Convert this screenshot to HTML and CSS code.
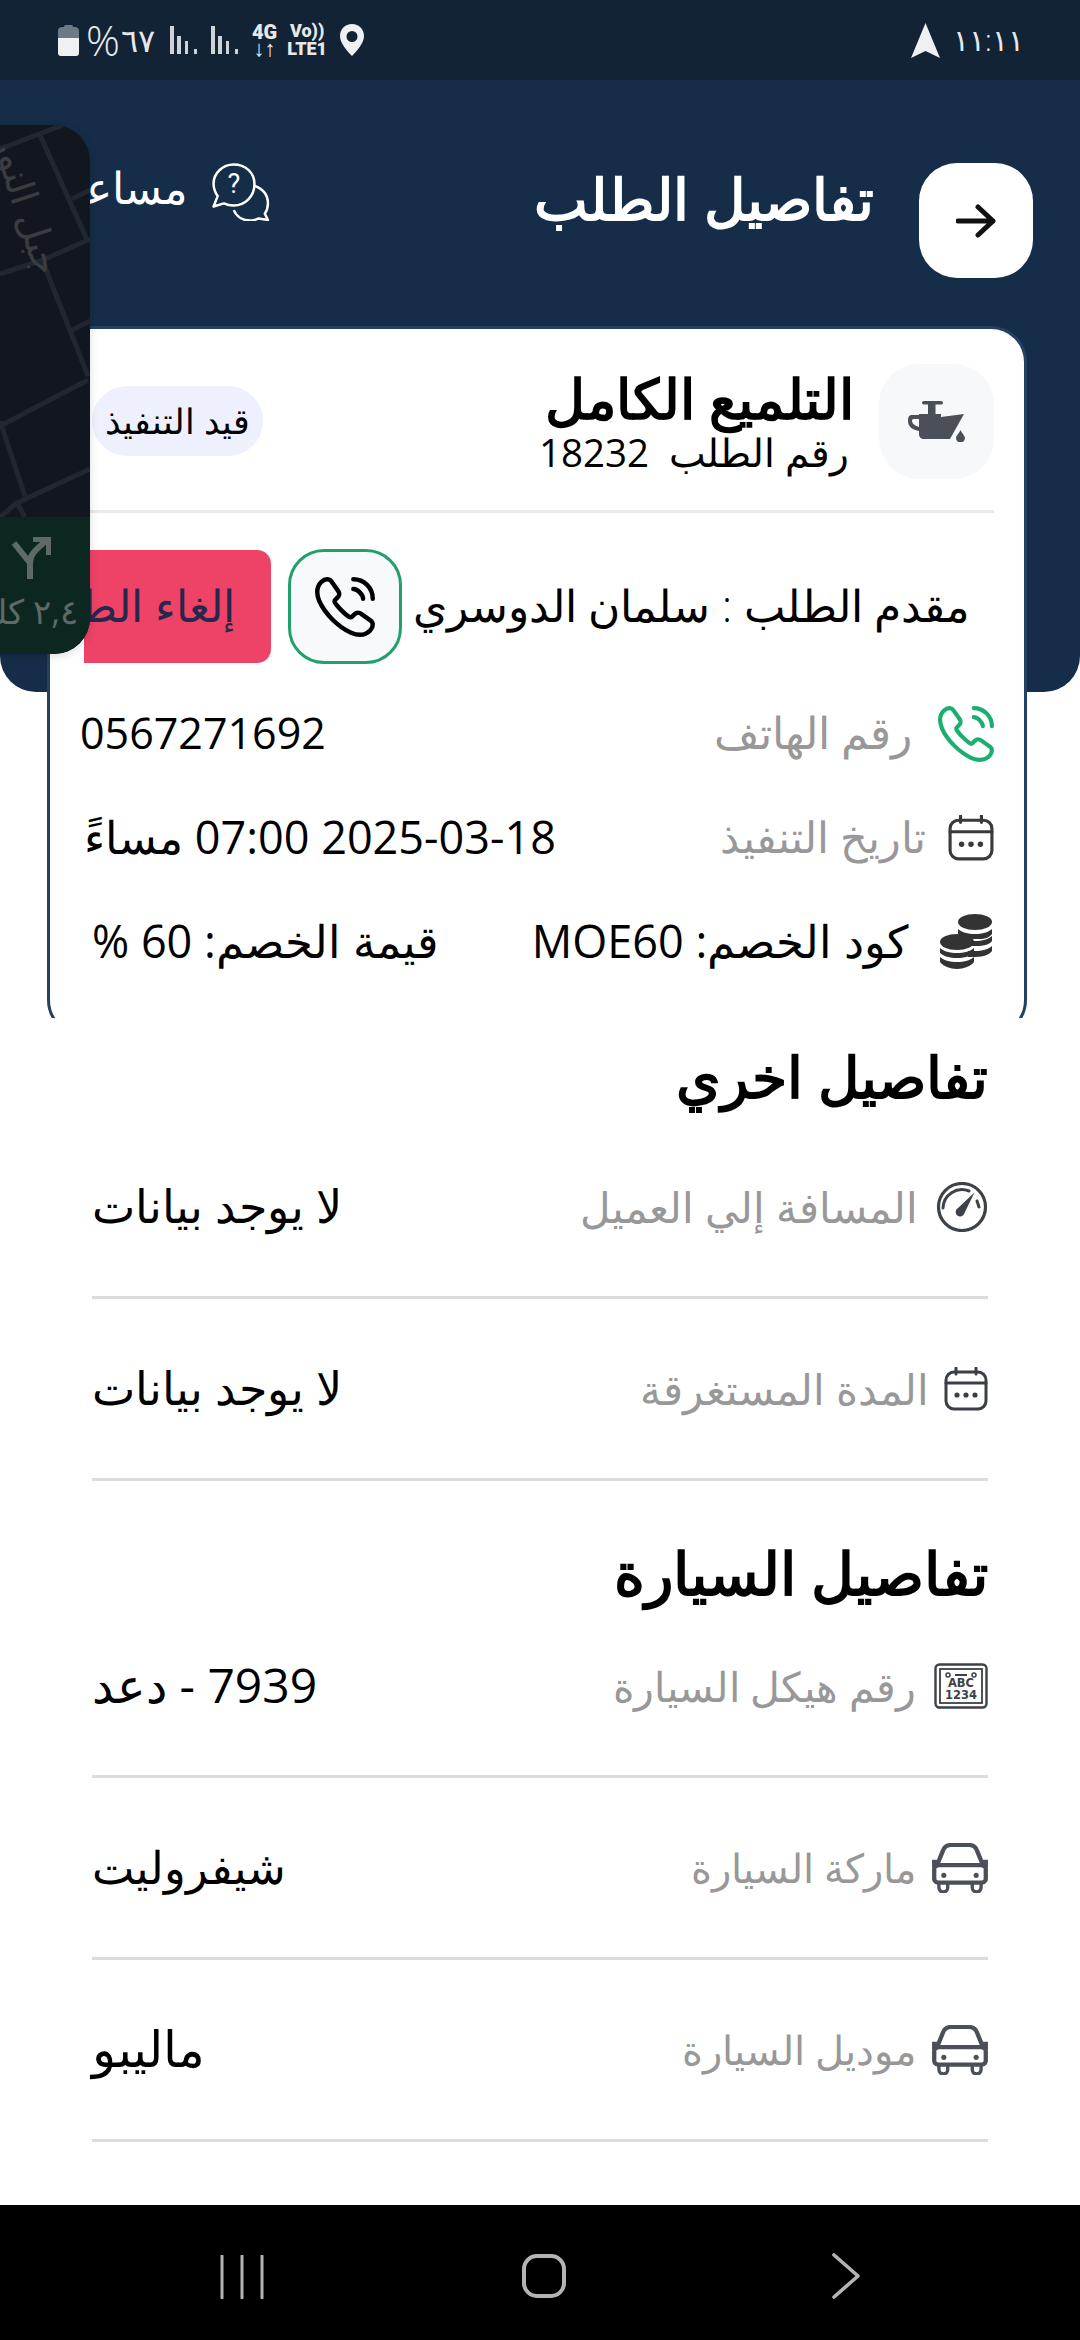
FILE: index.html
```html
<!DOCTYPE html>
<html lang="ar" dir="rtl">
<head>
<meta charset="utf-8">
<title>تفاصيل الطلب</title>
<link rel="stylesheet" href="styles.css">
</head>
<body>
<svg class="sprites" width="0" height="0">
  <symbol id="i-call" viewBox="1.2 1.2 21.6 21.6">
    <path fill="none" stroke="currentColor" stroke-width="1.6" stroke-miterlimit="10" d="M21.97 18.33c0 .36-.08.73-.25 1.09-.17.36-.39.7-.68 1.02-.49.54-1.03.93-1.64 1.18-.6.25-1.25.38-1.95.38-1.02 0-2.11-.24-3.26-.73s-2.3-1.15-3.44-1.98a28.75 28.75 0 0 1-3.28-2.8 28.414 28.414 0 0 1-2.79-3.27c-.82-1.14-1.48-2.28-1.96-3.41C2.24 8.67 2 7.58 2 6.54c0-.68.12-1.33.36-1.93.24-.61.62-1.17 1.15-1.67C4.15 2.31 4.85 2 5.59 2c.28 0 .56.06.81.18.26.12.49.3.67.56l2.32 3.27c.18.25.31.48.4.7.09.21.14.42.14.61 0 .24-.07.48-.21.71-.13.23-.32.47-.56.71l-.76.79c-.11.11-.16.24-.16.4 0 .08.01.15.03.23.03.08.06.14.08.2.18.33.49.76.93 1.28.45.52.93 1.05 1.45 1.58.54.53 1.06 1.02 1.59 1.47.52.44.95.74 1.29.92.05.02.11.05.18.08.08.03.16.04.25.04.17 0 .3-.06.41-.17l.76-.75c.25-.25.49-.44.72-.56.23-.14.46-.21.71-.21.19 0 .39.04.61.13.22.09.45.22.7.39l3.31 2.35c.26.18.44.39.55.64.1.25.16.5.16.78Z"/>
    <path fill="none" stroke="currentColor" stroke-width="1.6" stroke-linecap="round" stroke-linejoin="round" d="M18.5 9c0-.6-.47-1.52-1.17-2.27-.64-.69-1.49-1.23-2.33-1.23M22 9c0-3.87-3.13-7-7-7"/>
  </symbol>
  <symbol id="i-calendar" viewBox="0 0 44 44">
    <rect x="2" y="5" width="40" height="37" rx="8" fill="none" stroke="currentColor" stroke-width="3"/>
    <path d="M2 16h40M12 1v6M32 1v6" fill="none" stroke="currentColor" stroke-width="3" stroke-linecap="round"/>
    <circle cx="13" cy="28" r="2.6" fill="currentColor"/><circle cx="22" cy="28" r="2.6" fill="currentColor"/><circle cx="31" cy="28" r="2.6" fill="currentColor"/>
  </symbol>
  <symbol id="i-car" viewBox="0 0 57 51">
    <g fill="none" stroke="currentColor" stroke-linecap="round">
      <path stroke-width="4.4" stroke-linejoin="round" d="M5 23 11 8c1-3 4-6 9-6h17c5 0 8 3 9 6l6 15"/>
      <rect x="2.200" y="22.500" width="52.600" height="18" rx="4" stroke-width="4.400"/>
      <path stroke-width="3.400" d="M7 42v3.500a4.500 4.500 0 0 0 9 0V42M41 42v3.500a4.500 4.500 0 0 0 9 0V42"/>
    </g>
    <path fill="currentColor" d="M0 17h5v8H0ZM52 17h5v8h-5Z"/>
    <circle cx="12" cy="33" r="2.600" fill="currentColor"/><circle cx="45" cy="33" r="2.600" fill="currentColor"/>
  </symbol>
</svg>

<div class="page">
  <div class="status" dir="ltr">
    <div class="status-left">
      <svg class="st-battery" viewBox="0 0 21 32"><path fill="#6c7a86" d="M6 3c0-1.500 1-2 2-2h5c1 0 2 .5 2 2h2c2 0 4 1 4 4v7H0V7c0-3 2-4 4-4Z"/><path fill="#eef0f2" d="M0 14h21v15c0 2-1 3-3 3H3c-2 0-3-1-3-3Z"/></svg>
      <span class="st-pct"><span class="st-pct-sign">%</span><span class="st-pct-num">٦٧</span></span>
      <svg class="st-signal" viewBox="0 0 27 28"><path d="M0 0h4v28H0ZM7 10h4v18H7ZM15 15h3v13h-3ZM24 23h3v5h-3Z" fill="#cfd3d7"/></svg>
      <svg class="st-signal second" viewBox="0 0 27 28"><path d="M0 0h4v28H0ZM7 10h4v18H7ZM15 15h3v13h-3ZM24 23h3v5h-3Z" fill="#cfd3d7"/></svg>
      <span class="st-net"><b>4G</b><i>↓↑</i></span>
      <span class="st-volte"><b>Vo))</b><b>LTE1</b></span>
      <svg class="st-pin" viewBox="0 0 24 32"><path fill-rule="evenodd" fill="#eef0f2" d="M12 0C5 0 0 5 0 12c0 7 7 15 12 20 5-5 12-13 12-20C24 5 19 0 12 0Zm0 7a5.500 5.500 0 1 1 0 11 5.500 5.500 0 0 1 0-11Z"/></svg>
    </div>
    <div class="status-right">
      <svg class="st-nav" viewBox="0 0 29 35"><path fill="#eef0f2" d="M14.500 0 29 35 14.500 28 0 35Z"/></svg>
      <span class="st-time">١١:١١</span>
    </div>
  </div>

  <header class="hero">
    <button class="back">
      <svg viewBox="0 0 40 34" width="40" height="34"><path d="M2 17h35M22 3l15 14-15 14" fill="none" stroke="#111" stroke-width="5" stroke-linecap="round" stroke-linejoin="round"/></svg>
    </button>
    <h1 class="hero-title">تفاصيل الطلب</h1>
    <div class="help">
      <svg class="help-icon" viewBox="0 0 56 56"><g fill="none" stroke="#fff" stroke-width="2.400" stroke-linejoin="round"><path d="M21 1.500C10 1.500 1.500 10 1.500 20c0 5 2 9 4 12L1.500 42l10-3c3 1.500 6 2 9.500 2 11 0 20-9 20-20.500S32 1.500 21 1.500Z"/><path d="M41 22c8 3 13 9 13 17 0 4-1 7-3 10l3 6-9-1.500c-3 1.500-5 2-8 2-7 0-13-3-16-10"/></g><text x="21" y="29" text-anchor="middle" class="help-q">?</text></svg>
      <span class="help-label">مساعدة</span>
    </div>
  </header>

  <div class="card-clip">
    <article class="card">
      <div class="card-head">
        <div class="oil-tile">
          <svg viewBox="0 0 58 41" width="58" height="41"><path fill="#4b5058" d="M16 0h17c1 0 2 .8 2 1.800s-1 1.800-2 1.800h-5.500V13H33v3l23-3-14 25H16c-3 0-5-2-5-5v-3c-6-1-11-4-11-10 0-4 1-6 4-6h7v-1h9V3.600h-4c-1 0-2-.8-2-1.800S15 0 16 0ZM11 18H7c-2 0-3 0-3 2 0 3 4 5 7 6Z"/><path fill="#4b5058" d="M52.500 29c2 4 4.500 6 4.500 8a4.500 4.500 0 0 1-9 0c0-2 2.500-4 4.500-8Z"/></svg>
        </div>
        <div class="head-text">
          <h2 class="service">التلميع الكامل</h2>
          <p class="order-no">رقم الطلب&nbsp; 18232</p>
        </div>
        <span class="chip">قيد التنفيذ</span>
      </div>

      <div class="person">
        <span class="person-name">مقدم الطلب : سلمان الدوسري</span>
        <button class="call-btn"><svg width="60" height="60"><use href="#i-call"/></svg></button>
        <button class="cancel-btn">إلغاء الطلب</button>
      </div>

      <div class="info-row">
        <svg class="ic-phone" width="56" height="56"><use href="#i-call"/></svg>
        <span class="muted">رقم الهاتف</span>
        <span class="ltr-value" dir="ltr">0567271692</span>
      </div>
      <div class="info-row date">
        <svg class="ic-cal" width="46" height="46"><use href="#i-calendar"/></svg>
        <span class="muted">تاريخ التنفيذ</span>
        <span class="value">2025-03-18 07:00 مساءً</span>
      </div>
      <div class="info-row">
        <svg class="ic-coins" viewBox="0 0 56 56" width="56" height="56"><g fill="#333"><ellipse cx="37" cy="8" rx="17" ry="8"/><path d="M20 15c3 3 10 5 17 5s14-2 17-5v5c-2 3-7 5-12 5h-6c-6 0-12-2-16-5ZM28 27h9c7 0 14-2 17-5v5c-2 3-7 5-17 5h-9ZM30 37h7c7 0 14-2 17-5v5c-2 3-8 6-17 6h-7Z"/><ellipse cx="19" cy="28" rx="17" ry="8"/><path d="M2 34c3 3 10 5 17 5s14-2 17-5v5c-3 3-10 5-17 5S5 42 2 39ZM2 43c3 3 10 5 17 5s14-2 17-5v5c-3 4-10 7-17 7S5 52 2 48Z"/></g></svg>
        <span class="plain wide">كود الخصم: MOE60</span>
        <span class="plain last">قيمة الخصم: 60 %</span>
      </div>
    </article>
  </div>

  <section class="details">
    <h3 class="sec-title">تفاصيل اخري</h3>
    <div class="d-row">
      <svg class="d-ic" viewBox="0 0 52 50" width="52" height="50"><g fill="none" stroke="#3d4249" stroke-linecap="round"><circle cx="26" cy="25" r="23.500" stroke-width="3.200"/><path stroke-width="3" d="M7 26a19 19 0 0 1 26-17M41 19l2 6"/></g><path fill="#3d4249" d="M38.500 10.500 28.500 31a4.500 4.500 0 1 1-6.500-5Z"/></svg>
      <span class="muted wide-label">المسافة إلي العميل</span>
      <span class="d-value">لا يوجد بيانات</span>
    </div>
    <div class="d-row">
      <svg class="d-ic cal" width="44" height="44"><use href="#i-calendar"/></svg>
      <span class="muted near">المدة المستغرقة</span>
      <span class="d-value">لا يوجد بيانات</span>
    </div>

    <h3 class="sec-title second">تفاصيل السيارة</h3>
    <div class="d-row">
      <svg class="d-ic" viewBox="0 0 54 46" width="54" height="46"><rect x="1.500" y="1.500" width="51" height="43" rx="4" fill="none" stroke="#3d4249" stroke-width="2.400"/><rect x="6" y="6" width="42" height="34" fill="none" stroke="#3d4249" stroke-width="1.800"/><circle cx="14" cy="12" r="2" fill="none" stroke="#3d4249" stroke-width="1.500"/><circle cx="40" cy="12" r="2" fill="none" stroke="#3d4249" stroke-width="1.500"/><path d="M21 12h12" stroke="#3d4249" stroke-width="2"/><text x="27" y="24" class="plate">ABC</text><text x="27" y="36" class="plate">1234</text></svg>
      <span class="muted">رقم هيكل السيارة</span>
      <span class="d-value number">7939 - دعد</span>
    </div>
    <div class="d-row">
      <svg class="d-ic car" width="56" height="50"><use href="#i-car"/></svg>
      <span class="muted car-label">ماركة السيارة</span>
      <span class="d-value brand">شيفروليت</span>
    </div>
    <div class="d-row">
      <svg class="d-ic car" width="56" height="50"><use href="#i-car"/></svg>
      <span class="muted car-label">موديل السيارة</span>
      <span class="d-value model">ماليبو</span>
    </div>
  </section>

  <nav class="navbar" dir="ltr">
    <svg viewBox="0 0 44 44" width="44" height="44" class="nav-recent"><path d="M2 1v42M22 1v42M42 1v42" stroke="#b4b4b4" stroke-width="3" stroke-linecap="round"/></svg>
    <svg viewBox="0 0 44 44" width="44" height="44" class="nav-home"><rect x="2" y="2" width="40" height="40" rx="13" fill="none" stroke="#b4b4b4" stroke-width="4"/></svg>
    <svg viewBox="0 0 30 46" width="30" height="46" class="nav-back"><path d="M3 2l24 21L3 44" fill="none" stroke="#b4b4b4" stroke-width="3.600" stroke-linecap="round" stroke-linejoin="round"/></svg>
  </nav>

  <aside class="float-map">
    <svg class="map" viewBox="0 0 90 392" width="90" height="392">
      <g fill="none" stroke="#20272f" stroke-width="5">
        <path d="M0 24 63 0M40 10l48 107M72 74l18-9M0 149l43-14 47-21M43 137l45 114M72 205l18-9M0 301l88-46M0 296l25 75M0 392l17-14 73-34M17 378l8 14"/>
      </g>
      <text class="map-label" transform="translate(36 152) rotate(72)">جبل النور</text>
    </svg>
    <div class="turn">
      <svg class="turn-icon" viewBox="0 0 40 42" width="40" height="42"><path d="M3 6l16 20v16M19 26c0-8 4-12 16-22M22 2h16v16" fill="none" stroke="#5e6a66" stroke-width="6"/></svg>
      <span class="turn-dist">٢,٤ كلم</span>
    </div>
  </aside>
</div>
</body>
</html>
```
FILE: styles.css
```css
* { box-sizing: border-box; margin: 0; padding: 0; }

html, body { width: 1080px; height: 2340px; background: #fff; }

body {
  font-family: "Open Sans", "Noto Sans", sans-serif;
  color: #000;
}

.sprites { position: absolute; }

.page {
  position: relative;
  display: flex;
  flex-direction: column;
  width: 1080px;
  height: 2340px;
  overflow: hidden;
}

/* status bar */
.status {
  display: flex;
  justify-content: space-between;
  align-items: center;
  flex: none;
  height: 80px;
  padding: 0 56px 0 58px;
  background: #122335;
  color: #e6e8ea;
}

.status-left, .status-right { display: flex; align-items: center; }

.st-battery { width: 21px; height: 32px; }
.st-pct { display: flex; align-items: center; width: 70px; margin-left: 7px; white-space: nowrap; }
.st-pct-sign { font-size: 42px; line-height: 44px; font-weight: 300; }
.st-pct-num { margin-left: 1px; font-size: 32px; line-height: 40px; font-weight: 300; }
.st-signal { width: 27px; height: 28px; margin-left: 14px; }
.st-net, .st-volte { display: flex; flex-direction: column; align-items: center; font: 700 20px/18px "Roboto", sans-serif; }
.st-net { margin-left: 14px; }
.st-net i { font-style: normal; font-weight: 700; font-size: 22px; line-height: 16px; }
.st-volte { margin-left: 10px; font-size: 18px; }
.st-pin { width: 24px; height: 32px; margin-left: 13px; }
.st-nav { width: 29px; height: 35px; margin-right: 13px; }
.st-time { font-size: 30px; line-height: 34px; font-weight: 300; letter-spacing: -1.500px; }

/* navy header */
.hero {
  display: flex;
  align-items: flex-start;
  flex: none;
  height: 612px;
  margin-bottom: -366px;
  padding: 83px 47px 0 0;
  background: #152d48;
  border-radius: 0 0 36px 36px;
}

.back {
  display: flex;
  align-items: center;
  justify-content: center;
  flex: none;
  width: 114px;
  height: 115px;
  border: 0;
  border-radius: 38px;
  background: #fff;
}

.hero-title {
  margin-top: -3px;
  margin-right: 45px;
  color: #fff;
  font-size: 57px;
  line-height: 76px;
  font-weight: 700;
  white-space: nowrap;
}

.help {
  display: flex;
  gap: 24px;
  flex: none;
  width: 270px;
  margin-right: auto;
}

.help-icon { flex: none; width: 58px; height: 58px; }
.help-q { fill: #fff; font: 400 26px "Roboto", sans-serif; }
.help-label { margin-top: -4px; color: #fff; font-size: 44px; line-height: 56px; font-weight: 300; white-space: nowrap; }

/* order card */
.card-clip {
  position: relative;
  flex: none;
  height: 692px;
  margin: 0 53px 0 47px;
  overflow: hidden;
}

.card {
  height: 710px;
  padding: 35px 30px 0;
  background: #fff;
  border: 3px solid #234262;
  border-radius: 36px;
}

.card-head {
  display: flex;
  align-items: center;
  padding-bottom: 31px;
  border-bottom: 3px solid #e9e9e9;
}

.oil-tile {
  display: flex;
  align-items: center;
  justify-content: center;
  flex: none;
  width: 115px;
  height: 115px;
  border-radius: 40px;
  background: #f7f8fa;
}

.head-text { margin-right: 25px; }
.service { font-size: 55px; line-height: 60px; font-weight: 700; white-space: nowrap; }
.order-no { margin-right: 5px; font-size: 38.500px; line-height: 48px; font-weight: 400; white-space: nowrap; }

.chip {
  display: flex;
  align-items: center;
  justify-content: center;
  width: 171px;
  height: 70px;
  margin: 0 auto 2px 12px;
  border-radius: 35px;
  background: #eef1fd;
  font-size: 35px;
  font-weight: 300;
  white-space: nowrap;
}

.person {
  display: flex;
  align-items: center;
  margin-top: 36px;
  padding-right: 24px;
  white-space: nowrap;
}

.person-name { padding-bottom: 4px; font-size: 44px; line-height: 56px; font-weight: 300; }

.call-btn {
  display: flex;
  align-items: center;
  justify-content: center;
  flex: none;
  width: 114px;
  height: 115px;
  margin-right: 11px;
  border: 3px solid #22a06b;
  border-radius: 36px;
  background: #f7f9fb;
  color: #000;
}

.cancel-btn {
  flex: none;
  width: 187px;
  height: 113px;
  margin-right: 17px;
  padding: 0 36px 4px 0;
  overflow: hidden;
  border: 0;
  border-radius: 0 14px 14px 0;
  background: #ee4266;
  color: #26274a;
  font: 300 44px "Open Sans", "Noto Sans", sans-serif;
  text-align: right;
  white-space: nowrap;
}

.info-row {
  display: flex;
  align-items: center;
  height: 104px;
  font-size: 45px;
  white-space: nowrap;
}

.info-row span { padding-bottom: 4px; }

.person + .info-row { margin-top: 18px; }

.muted { margin-right: 26px; color: #989898; font-size: 44px; font-weight: 300; }
.date .muted { margin-right: 22px; font-size: 43px; }
.ltr-value { margin-right: auto; font-size: 43px; }
.value { margin-right: auto; margin-left: 4px; }
.ic-phone { color: #1aaf6e; }
.ic-cal { color: #3a3a3a; }
.plain { margin-right: 30px; }
.plain.wide { margin-left: auto; }
.plain.last { margin-left: 12px; margin-right: 0; }

/* details below the card */
.details { padding: 0 92px; }

.sec-title { margin: 20px 0 3px; font-size: 57px; line-height: 76px; font-weight: 700; }
.sec-title.second { margin: 65px 0 -2px; font-size: 59px; line-height: 52px; }

.d-row {
  display: flex;
  align-items: center;
  height: 182px;
  border-bottom: 3px solid #dcdcdc;
  white-space: nowrap;
}

.d-ic { flex: none; }
.d-ic.cal { color: #3a3f46; }
.d-ic.car { color: #4b5058; }
.d-row .muted { margin-right: 18px; font-size: 41px; }
.d-row .muted.wide-label { font-size: 41.500px; }
.d-row .muted.near { margin-right: 15px; font-size: 41.500px; }
.d-row .muted.car-label { margin-right: 16px; font-size: 40px; }
.d-value { margin-right: auto; padding-bottom: 3px; font-size: 46px; font-weight: 300; }
.d-value.number { font-size: 48px; font-weight: 400; }
.d-value.brand { font-size: 45px; }
.d-value.model { font-size: 50px; }

.plate { fill: #3d4249; font: 700 11.500px "DejaVu Sans", sans-serif; text-anchor: middle; }

/* system navigation */
.navbar {
  position: relative;
  flex: none;
  height: 135px;
  margin-top: auto;
  background: #000;
}

.nav-recent { position: absolute; left: 220px; top: 50px; }
.nav-home { position: absolute; left: 522px; top: 49px; }
.nav-back { position: absolute; left: 831px; top: 48px; }

/* floating mini map */
.float-map {
  position: absolute;
  left: 0;
  top: 125px;
  display: flex;
  flex-direction: column;
  width: 90px;
  height: 529px;
  overflow: hidden;
  border-radius: 0 36px 36px 0;
  background: #12161e;
  box-shadow: 0 2px 8px rgba(0, 0, 0, .15);
}

.map { flex: none; }
.map-label { fill: #3a3d40; font-size: 38px; }

.turn {
  display: flex;
  flex-direction: column;
  height: 137px;
  padding-top: 20px;
  background: #0c2620;
}

.turn-icon { align-self: flex-end; margin-left: 11px; }

.turn-dist {
  align-self: flex-start;
  margin-top: 10px;
  margin-right: 12px;
  color: #5e6a66;
  font-size: 34px;
  line-height: 44px;
  white-space: nowrap;
}
```
